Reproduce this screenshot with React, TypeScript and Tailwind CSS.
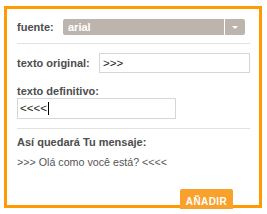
export default function App() {
  const font = { fontFamily: '"Liberation Sans", Arial, sans-serif' };

  return (
    <div className="w-[267px] h-[214px] bg-white overflow-hidden" style={font}>
      <div className="relative ml-[4px] mt-[6px] w-[258px] h-[202px] border-[3px] border-[#ff9a00] pl-[10px] pr-[9px] pt-[10px]">
        {/* fuente */}
        <div className="flex items-center">
          <span className="w-[46px] text-[11px] leading-[13px] font-bold text-[#4d4d4d]">fuente:</span>
          <div className="flex w-[182px] h-[16px] rounded-[2px] overflow-hidden">
            <div className="flex-1 bg-[#bdb5ad] text-white font-bold text-[11px] leading-[16px] pl-[5px]">arial</div>
            <div className="w-px bg-white" />
            <div className="w-[20px] bg-[#bdb5ad] flex items-center justify-center">
              <div className="w-0 h-0 border-l-[3px] border-r-[3px] border-t-[3px] border-l-transparent border-r-transparent border-t-white" />
            </div>
          </div>
        </div>

        <div className="mt-[8px] h-px bg-[#e2e2e2]" />

        {/* texto original */}
        <div className="flex items-center mt-[9px]">
          <span className="w-[82px] text-[11px] leading-[13px] font-bold text-[#4d4d4d]">texto original:</span>
          <div className="w-[151px] h-[20px] border border-[#d6d6d6] pl-[3px] text-[11.5px] leading-[18px] text-[#222]">
            &gt;&gt;&gt;
          </div>
        </div>

        {/* texto definitivo */}
        <div className="mt-[12px] text-[11px] leading-[13px] font-bold text-[#4d4d4d]">texto definitivo:</div>
        <div className="w-[159px] h-[21px] border border-[#d6d6d6] pl-[2px] text-[11.5px] leading-[19px] text-[#222] flex items-center">
          <span>&lt;&lt;&lt;&lt;</span>
          <span className="w-px h-[13px] bg-black ml-[1px]" />
        </div>

        <div className="mt-[9px] h-px bg-[#e2e2e2]" />

        <div className="mt-[7px] text-[11px] leading-[13px] font-bold text-[#4d4d4d]">Así quedará Tu mensaje:</div>
        <div className="mt-[7px] text-[10.7px] leading-[13px] text-[#555]">&gt;&gt;&gt; Olá como você está? &lt;&lt;&lt;&lt;</div>

        <button className="absolute left-[173px] top-[180px] w-[53px] h-[20px] bg-[#f8a12c] text-white font-bold text-[10px] tracking-[0.4px] leading-[11px] pt-[5px] rounded-t-[2px]">
          AÑADIR
        </button>
      </div>
    </div>
  );
}
